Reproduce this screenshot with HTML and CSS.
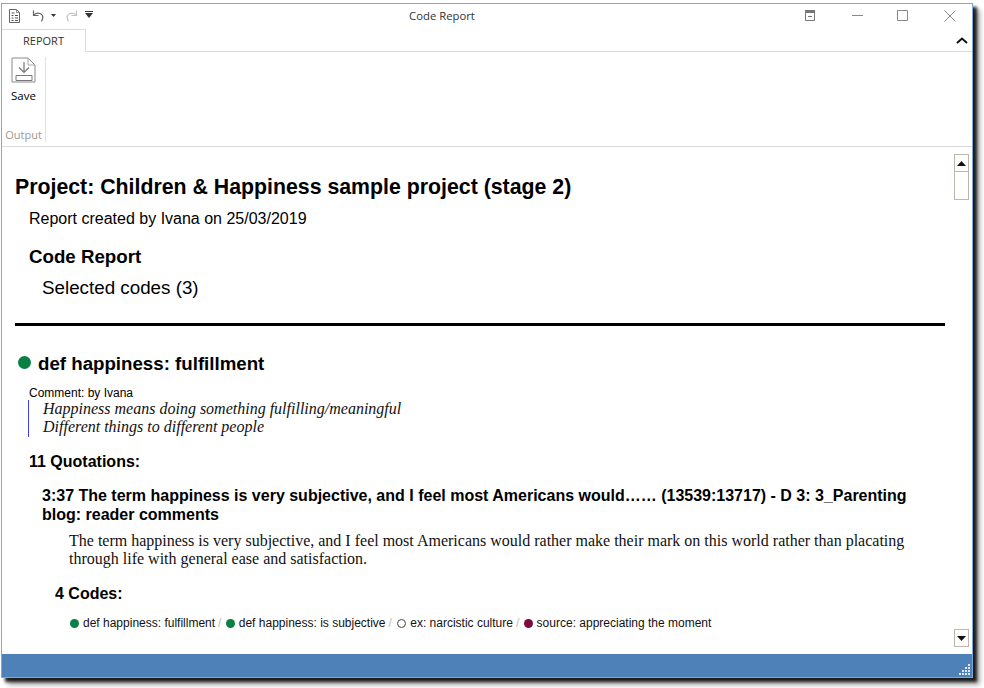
FILE: index.html
```html
<!DOCTYPE html>
<html lang="en">
<head>
<meta charset="utf-8">
<title>Code Report</title>
<link rel="stylesheet" href="styles.css">
</head>
<body>
<div class="window">
  <header class="titlebar">
    <div class="qat">
      <svg class="ic" width="14" height="16" viewBox="0 0 14 16"><path d="M1.500 1.500h7l3 3v10h-10z" fill="#fff" stroke="#666"/><path d="M8.500 1.500v3h3" fill="none" stroke="#888"/><path d="M3.500 5h3M3.500 7.500h2M7 7.500h3M3.500 10h2M7 10h3M3.500 12.500h2M7 12.500h3" stroke="#555"/></svg>
      <svg class="ic undo" width="13" height="12" viewBox="0 0 13 12"><path d="M1.500.500v5h5M1.500 5.500c2-3 7-3.500 9 0 1 2 0 4-1 6" fill="none" stroke="#666" stroke-width="1.200"/></svg>
      <svg class="ic drop" width="5" height="3" viewBox="0 0 5 3"><path d="M0 0h5L2.500 3z" fill="#333"/></svg>
      <svg class="ic redo" width="13" height="12" viewBox="0 0 13 12"><path d="M11.500.500v5h-5M11.500 5.500c-2-3-7-3.500-9 0-1 2 0 4 1 6" fill="none" stroke="#c4c4c4" stroke-width="1.200"/></svg>
      <svg class="ic more" width="8" height="7" viewBox="0 0 8 7"><path d="M0 0h8v1H0zM0 2h8L4 7z" fill="#333"/></svg>
    </div>
    <div class="title">Code Report</div>
    <div class="controls">
      <svg width="10" height="11" viewBox="0 0 10 11"><path d="M.5.500h9v10h-9z" fill="#fff" stroke="#777"/><path d="M0 0h10v3H0z" fill="#777"/><path d="M3 6.500h4" stroke="#777"/></svg>
      <svg class="min" width="11" height="1" viewBox="0 0 11 1"><path d="M0 0h11v1H0z" fill="#888"/></svg>
      <svg class="max" width="11" height="11" viewBox="0 0 11 11"><path d="M.5.500h10v10H.5z" fill="none" stroke="#888"/></svg>
      <svg class="close" width="12" height="12" viewBox="0 0 12 12"><path d="M.5.500l11 11M11.500.500l-11 11" stroke="#888"/></svg>
    </div>
  </header>
  <div class="tabrow">
    <div class="tab">REPORT</div>
    <svg class="collapse" width="12" height="7" viewBox="0 0 12 7"><path d="M1 6l5-4.500L11 6" fill="none" stroke="#111" stroke-width="2"/></svg>
  </div>
  <div class="ribbon">
    <div class="group">
      <div class="tool">
        <svg width="26" height="27" viewBox="0 0 26 27"><path d="M1 24V1h16l7 7v17H1z" fill="#fff" stroke="#8a8a8a"/><path d="M17 1v7h7" fill="none" stroke="#aaa"/><path d="M5 18.500h16v5H5z" fill="#fff" stroke="#777"/><path d="M13 5v10M8 10.500l5 5 5-5" fill="none" stroke="#777" stroke-width="1.200"/></svg>
        <span class="tool-label">Save</span>
      </div>
      <div class="group-label">Output</div>
    </div>
  </div>
  <main class="viewport">
    <div class="report">
      <h1 class="project">Project: Children &amp; Happiness sample project (stage 2)</h1>
      <p class="created">Report created by Ivana on 25/03/2019</p>
      <h2 class="report-title">Code Report</h2>
      <p class="selected">Selected codes (3)</p>
      <hr class="rule">
      <h3 class="code"><span class="dot dot-big green"></span>def happiness: fulfillment</h3>
      <div class="comment-by">Comment: by Ivana</div>
      <blockquote class="comment">Happiness means doing something fulfilling/meaningful<br>Different things to different people</blockquote>
      <h4 class="quotes">11 Quotations:</h4>
      <h4 class="quote-title">3:37 The term happiness is very subjective, and I feel most Americans would…… (13539:13717) - D 3: 3_Parenting blog: reader comments</h4>
      <p class="quote-body">The term happiness is very subjective, and I feel most Americans would rather make their mark on this world rather than placating through life with general ease and satisfaction.</p>
      <h4 class="codes">4 Codes:</h4>
      <div class="codelist">
        <span class="dot green"></span><span>def happiness: fulfillment</span><span class="sep">/</span>
        <span class="dot green"></span><span>def happiness: is subjective</span><span class="sep">/</span>
        <span class="dot hollow"></span><span>ex: narcistic culture</span><span class="sep">/</span>
        <span class="dot maroon"></span><span>source: appreciating the moment</span>
      </div>
    </div>
    <div class="scrollbar">
      <div class="sb-btn"><svg width="9" height="5" viewBox="0 0 9 5"><path d="M4.500 0L9 5H0z" fill="#111"/></svg></div>
      <div class="sb-thumb"></div>
      <div class="sb-space"></div>
      <div class="sb-btn"><svg width="9" height="5" viewBox="0 0 9 5"><path d="M0 0h9L4.500 5z" fill="#111"/></svg></div>
    </div>
  </main>
  <footer class="statusbar">
    <svg class="grip" width="12" height="12" viewBox="0 0 12 12"><path d="M9 0h2v2H9zM6 3h2v2H6zM9 3h2v2H9zM3 6h2v2H3zM6 6h2v2H6zM9 6h2v2H9zM0 9h2v2H0zM3 9h2v2H3zM6 9h2v2H6zM9 9h2v2H9z" fill="#dfe8f2"/></svg>
  </footer>
</div>
</body>
</html>
```
FILE: styles.css
```css
* { box-sizing: border-box; }
html, body { margin: 0; padding: 0; height: 100%; background: #fff; overflow: hidden; }
body { padding: 3px 0 0 1px; font-family: "Liberation Sans", Arial, sans-serif; color: #000; }

.window {
  width: 972px;
  height: 675px;
  border: 1px solid #7fa8d8;
  background: #fff;
  display: flex;
  flex-direction: column;
  box-shadow: 4px 4px 3px rgba(0,0,0,.85), 7px 7px 5px rgba(0,0,0,.3);
}

.titlebar {
  height: 25px;
  flex: none;
  display: grid;
  grid-template-columns: 1fr auto 1fr;
  align-items: center;
  font-family: "Open Sans", sans-serif;
}
.qat { display: flex; align-items: center; padding-left: 6px; margin-top: -2px; }
.ic { display: block; flex: none; }
.undo { margin-left: 10px; }
.drop { margin-left: 6px; }
.redo { margin-left: 9px; }
.more { margin-left: 7px; margin-top: -3px; }
.title { font-size: 11.300px; color: #333; margin: -3px 90px 0 0; }
.controls { display: flex; align-items: center; justify-content: flex-end; padding-right: 16px; margin-top: -2px; }
.min { margin-left: 37px; }
.max { margin-left: 34px; }
.close { margin-left: 36px; }

.tabrow {
  height: 23px;
  flex: none;
  display: flex;
  justify-content: space-between;
  align-items: center;
  border-bottom: 1px solid #dcdcdc;
  padding-right: 4px;
}
.tab {
  width: 84px;
  height: 23px;
  border: 1px solid #dcdcdc;
  border-left: 0;
  border-bottom: 0;
  background: #fff;
  font: 11px "Open Sans", sans-serif;
  color: #333;
  text-align: center;
  line-height: 21px;
  margin-bottom: -1px;
}
.collapse { margin-top: 1px; }

.ribbon {
  height: 95px;
  flex: none;
  border-bottom: 1px solid #dcdcdc;
  padding: 5px 0 4px;
  display: flex;
}
.group {
  width: 44px;
  border-right: 1px solid #e2e2e2;
  display: flex;
  flex-direction: column;
  align-items: center;
  justify-content: space-between;
}
.tool { display: flex; flex-direction: column; align-items: center; gap: 4px; }
.tool-label { font: 11.500px "Open Sans", sans-serif; color: #000; }
.group-label { font: 11px "Open Sans", sans-serif; color: #999; line-height: 15px; }

.viewport { flex: 1; min-height: 0; display: flex; overflow: hidden; }
.report { flex: 1; min-width: 0; overflow: hidden; padding: 29px 5px 0 13px; }

.project { font-size: 21.300px; line-height: 23px; font-weight: bold; margin: 0; }
.created { font-size: 16px; line-height: 18px; margin: 11px 0 0 14px; }
.report-title { font-size: 18.700px; line-height: 22px; font-weight: bold; margin: 18px 0 0 14px; }
.selected { font-size: 18.800px; line-height: 21px; margin: 9px 0 0 27px; }
.rule { height: 3px; border: 0; background: #000; margin: 25px 0 0 0; }
.code { font-size: 18.700px; line-height: 22px; font-weight: bold; margin: 27px 0 0 3px; display: flex; align-items: center; }
.dot { display: inline-block; width: 9px; height: 9px; border-radius: 50%; flex: none; vertical-align: -0.500px; }
.dot-big { width: 13px; height: 13px; margin-right: 7px; margin-top: -3px; }
.green { background: #0a7f43; }
.maroon { background: #7d0a3c; }
.hollow { background: #fff; border: 1px solid #444; }
.comment-by { font-size: 12px; line-height: 14px; margin: 11px 0 0 14px; }
.comment {
  font: italic 16px/18px "Liberation Serif", "Times New Roman", serif;
  color: #111;
  margin: 0 0 0 13px;
  padding-left: 14px;
  border-left: 1px solid #4040f5;
  height: 37px;
}
.quotes { font-size: 16px; line-height: 18px; font-weight: bold; margin: 16px 0 0 14px; }
.quote-title { font-size: 16px; line-height: 19px; font-weight: bold; margin: 15px 0 0 27px; }
.quote-body { font: 16px/18px "Liberation Serif", "Times New Roman", serif; margin: 8px 0 0 54px; color: #111; }
.codes { font-size: 16px; line-height: 18px; font-weight: bold; margin: 17px 0 0 40px; }
.codelist { font-size: 12px; line-height: 14px; margin: 13px 0 0 55px; white-space: nowrap; color: #111; }
.codelist .dot { margin-right: 4px; }
.codelist .hollow { margin-left: 1px; }
.sep { color: #bbb; margin: 0 1px 0 3px; }

.scrollbar {
  width: 22px;
  flex: none;
  padding: 7px 3px 7px 4px;
  display: flex;
  flex-direction: column;
}
.sb-btn {
  height: 18px;
  flex: none;
  border: 1px solid #bcb8ac;
  display: flex;
  align-items: center;
  justify-content: center;
  background: #fdfdfd;
}
.sb-thumb { height: 28px; flex: none; border: 1px solid #bcb8ac; border-top: 0; background: #fff; }
.sb-space { flex: 1; }

.statusbar {
  height: 23px;
  flex: none;
  background: #4d81b8;
  display: flex;
  justify-content: flex-end;
  align-items: flex-end;
  padding: 0 1px 1px 0;
}
.grip { display: block; }
```
